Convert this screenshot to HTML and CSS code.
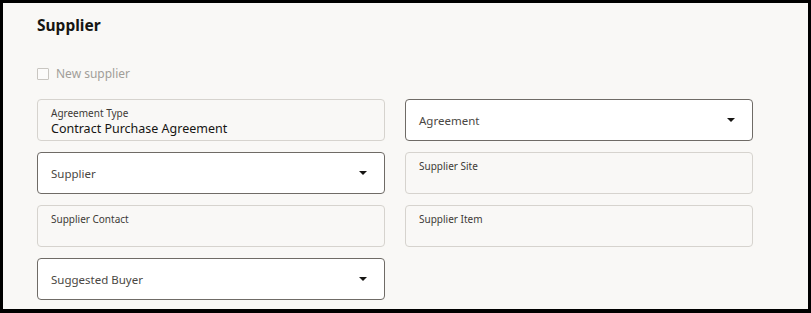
FILE: index.html
```html
<!DOCTYPE html>
<html>

<head>
  <title>Supplier</title>
  <link rel="stylesheet" href="styles.css">
</head>

<body>
  <div class="frame">
    <h2 class="title">Supplier</h2>
    <label class="check">
      <span class="box"></span>
      New supplier
    </label>
    <div class="fields">
      <div class="field readonly">
        <span class="label">Agreement Type</span>
        <span class="value">Contract Purchase Agreement</span>
      </div>
      <div class="field select">
        <span class="hint">Agreement</span>
        <span class="caret"></span>
      </div>
      <div class="field select">
        <span class="hint">Supplier</span>
        <span class="caret"></span>
      </div>
      <div class="field readonly">
        <span class="label">Supplier Site</span>
      </div>
      <div class="field readonly">
        <span class="label">Supplier Contact</span>
      </div>
      <div class="field readonly">
        <span class="label">Supplier Item</span>
      </div>
      <div class="field select">
        <span class="hint">Suggested Buyer</span>
        <span class="caret"></span>
      </div>
    </div>
  </div>
</body>

</html>
```

FILE: styles.css
```css
body {
  margin: 0;
  font-family: "Noto Sans", "Open Sans", sans-serif;
  color: #161513;
}

.frame {
  box-sizing: border-box;
  width: 811px;
  height: 313px;
  border: 3px solid #000;
  border-bottom-width: 4px;
  background: #f9f8f6;
  padding: 12px 0 0 34px;
  overflow: hidden;
}

.title {
  margin: 0;
  font-size: 15.5px;
  font-weight: bold;
  line-height: 20px;
}

.check {
  display: flex;
  align-items: center;
  gap: 7px;
  margin-top: 30px;
  font-size: 12px;
  line-height: 18px;
  color: #a19e99;
}

.box {
  box-sizing: border-box;
  width: 12px;
  height: 12px;
  border: 1px solid #c9c6c1;
  border-radius: 1px;
  background: #fcfbfa;
}

.fields {
  display: grid;
  grid-template-columns: 348px 348px;
  grid-auto-rows: 42px;
  gap: 11px 20px;
  margin-top: 16px;
}

.field {
  box-sizing: border-box;
  border-radius: 4px;
  padding: 0 13px;
}

.readonly {
  border: 1px solid #d6d3ce;
  background: #f9f8f6;
  padding-top: 7px;
}

.select {
  border: 1px solid #6f6b66;
  background: #fff;
  display: flex;
  align-items: center;
  justify-content: space-between;
  padding-right: 17px;
}

.label {
  display: block;
  font-size: 10px;
  line-height: 13px;
  color: #3d3a36;
}

.value {
  display: block;
  font-size: 12.5px;
  line-height: 17px;
  color: #161513;
}

.hint {
  font-size: 11.5px;
  color: #4a4743;
}

.caret {
  width: 0;
  height: 0;
  border-left: 4px solid transparent;
  border-right: 4px solid transparent;
  border-top: 4px solid #161513;
}
```
